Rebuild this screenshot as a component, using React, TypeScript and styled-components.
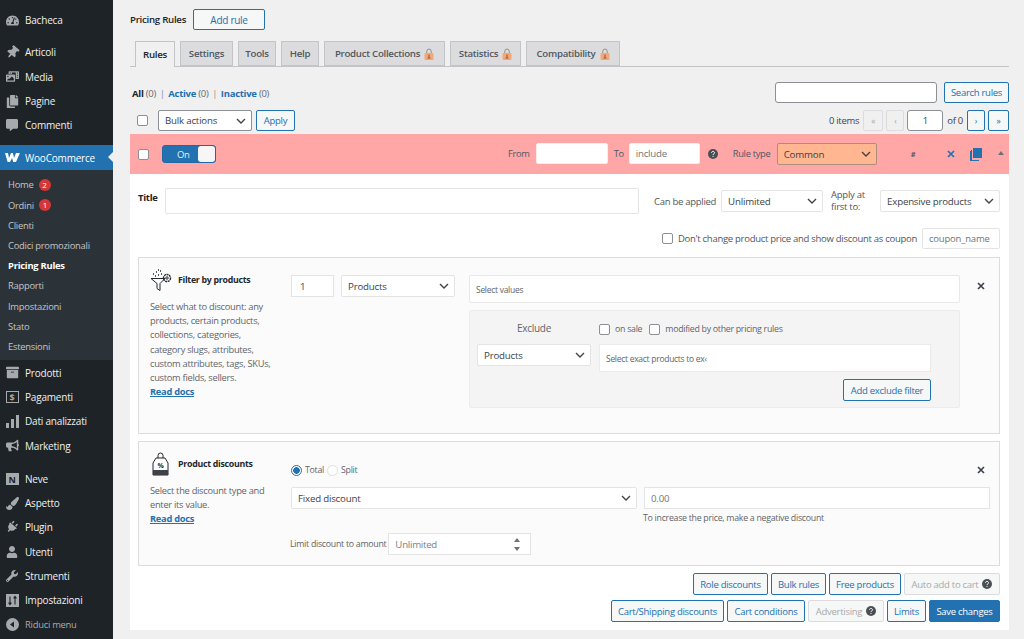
import { ReactNode } from 'react'
import styled, { createGlobalStyle } from 'styled-components'
import {
  FaTachometerAlt,
  FaThumbtack,
  FaPhotoVideo,
  FaCopy,
  FaCommentAlt,
  FaArchive,
  FaBullhorn,
  FaPaintBrush,
  FaPlug,
  FaUser,
  FaWrench,
} from 'react-icons/fa'

const font = `'Open Sans', 'Noto Sans', sans-serif`
const chevron = `url("data:image/svg+xml,%3Csvg xmlns='http://www.w3.org/2000/svg' width='10' height='6' viewBox='0 0 10 6'%3E%3Cpath d='M1 1l4 4 4-4' fill='none' stroke='%23444' stroke-width='1.4'/%3E%3C/svg%3E")`

const GlobalStyle = createGlobalStyle`
  html, body {
    margin: 0;
    padding: 0;
    background: #f0f0f1;
    font-family: ${font};
    overflow: hidden;
  }
  * { box-sizing: border-box; }
  input, select, button { letter-spacing: -0.2px; }
`

type TopItem = { label: string; icon: ReactNode; gap?: number }

const PayIcon = () => <BoxGlyph $outline>$</BoxGlyph>
const NeveIcon = () => <BoxGlyph>N</BoxGlyph>

const PinIcon = () => (
  <Tilted>
    <FaThumbtack size={13} />
  </Tilted>
)

const PlugIcon = () => (
  <Tilted>
    <FaPlug size={12} />
  </Tilted>
)

const BarsIcon = () => (
  <svg width="13" height="13" viewBox="0 0 13 13" fill="currentColor">
    <rect x="0" y="8" width="3" height="5" />
    <rect x="5" y="4" width="3" height="9" />
    <rect x="10" y="0" width="3" height="13" />
  </svg>
)

const SlidersIcon = () => (
  <svg width="13" height="13" viewBox="0 0 13 13">
    <rect width="13" height="13" fill="currentColor" />
    <path d="M4 2.5v8M2.6 8.6L4 10.5l1.4-1.9M9 10.5v-8M7.6 4.4L9 2.5l1.4 1.9" stroke="#1d2327" strokeWidth="1.1" fill="none" />
  </svg>
)

const CollapseIcon = () => (
  <svg width="13" height="13" viewBox="0 0 13 13">
    <circle cx="6.5" cy="6.5" r="6.5" fill="currentColor" />
    <path d="M8 3.4v6.2L4 6.5z" fill="#1d2327" />
  </svg>
)

const WooIcon = () => (
  <svg width="15" height="9" viewBox="0 0 15 9" fill="#fff">
    <path d="M0 0h3l1 5 2-5h2l1 5 2-5h3.500q.5 0 .2.600L11 9H8.300L7 5 5 9H2.600z" />
  </svg>
)

const FunnelIcon = () => (
  <svg width="23" height="23" viewBox="0 0 23 23" fill="none" stroke="#23282d" strokeWidth="1">
    <path d="M1 9.500h14l-5 5v7l-3-2v-5z" />
    <circle cx="17" cy="9" r="3.500" strokeDasharray="2 0.6" strokeWidth="1.400" />
    <circle cx="17" cy="9" r="1.200" />
    <path d="M3 5h1M6 3h1M8 6h1M5 7h1M10 2h1M11 5h1M8 1h1" strokeWidth="1.300" />
  </svg>
)

const TagIcon = () => (
  <svg width="17" height="24" viewBox="0 0 17 24">
    <path d="M8.500 1a2.500 2.500 0 0 1 2.500 2.500V7H6V3.500A2.500 2.500 0 0 1 8.500 1z" fill="none" stroke="#23282d" />
    <path d="M4 6h9l3 5v12H1V11z" fill="#fff" stroke="#23282d" />
    <rect x="1" y="18" width="15" height="5" fill="#3c4248" />
    <text x="8.500" y="16" fontSize="7" fontWeight="700" textAnchor="middle" fill="#23282d" fontFamily="Open Sans">%</text>
  </svg>
)

const LockIcon = () => (
  <svg width="10" height="12" viewBox="0 0 10 12">
    <path d="M2.800 5.500V3.200a2.200 2.200 0 0 1 4.400 0v2.300" fill="none" stroke="#9a8f7c" strokeWidth="1" />
    <rect x="0.500" y="5" width="9" height="7" rx="1" fill="#f2a878" />
    <path d="M5 6.500v3M3.500 10h3" stroke="#a34a2a" strokeWidth="1" />
  </svg>
)

const HelpIcon = () => (
  <svg width="10" height="10" viewBox="0 0 10 10">
    <circle cx="5" cy="5" r="5" fill="#4a4f54" />
    <path d="M3.500 3.900c0-2 3-2 3 0 0 1-1.500 1-1.500 2.100" fill="none" stroke="#fff" strokeWidth="1" />
    <rect x="4.500" y="6.900" width="1" height="1" fill="#fff" />
  </svg>
)

const CopyIcon = () => (
  <svg width="12" height="13" viewBox="0 0 12 13" fill="#2271b1">
    <path d="M3 0h9v10H3z" />
    <path d="M1 2v11h8v-1H2V2z" />
    <path d="M0 3h1v10H0z" />
  </svg>
)

const CloseGlyph = () => (
  <svg width="8" height="8" viewBox="0 0 8 8" stroke="currentColor" strokeWidth="1.7">
    <path d="M1 1l6 6M7 1L1 7" />
  </svg>
)

const topItems: TopItem[] = [
  { label: 'Bacheca', icon: <FaTachometerAlt size={13} /> },
  { label: 'Articoli', icon: <PinIcon />, gap: 8 },
  { label: 'Media', icon: <FaPhotoVideo size={13} /> },
  { label: 'Pagine', icon: <FaCopy size={13} /> },
  { label: 'Commenti', icon: <FaCommentAlt size={12} /> },
]

const subItems = [
  { label: 'Home', badge: 2 },
  { label: 'Ordini', badge: 1 },
  { label: 'Clienti' },
  { label: 'Codici promozionali' },
  { label: 'Pricing Rules', current: true },
  { label: 'Rapporti' },
  { label: 'Impostazioni' },
  { label: 'Stato' },
  { label: 'Estensioni' },
]

const lowerItems: TopItem[] = [
  { label: 'Prodotti', icon: <FaArchive size={13} /> },
  { label: 'Pagamenti', icon: <PayIcon /> },
  { label: 'Dati analizzati', icon: <BarsIcon /> },
  { label: 'Marketing', icon: <FaBullhorn size={13} /> },
  { label: 'Neve', icon: <NeveIcon />, gap: 9 },
  { label: 'Aspetto', icon: <FaPaintBrush size={13} /> },
  { label: 'Plugin', icon: <PlugIcon /> },
  { label: 'Utenti', icon: <FaUser size={12} /> },
  { label: 'Strumenti', icon: <FaWrench size={12} /> },
  { label: 'Impostazioni', icon: <SlidersIcon /> },
]

const tabs = [
  { label: 'Rules', active: true, width: 40 },
  { label: 'Settings', width: 53 },
  { label: 'Tools', width: 38 },
  { label: 'Help', width: 38 },
  { label: 'Product Collections', locked: true, width: 121 },
  { label: 'Statistics', locked: true, width: 71 },
  { label: 'Compatibility', locked: true, width: 94 },
]

const App = () => {
  return (
    <Page>
      <GlobalStyle />
      <Sidebar>
        {topItems.map((item) => (
          <MenuItem key={item.label} $gap={item.gap}>
            <MenuIcon>{item.icon}</MenuIcon>
            {item.label}
          </MenuItem>
        ))}
        <WooItem>
          <MenuIcon>
            <WooIcon />
          </MenuIcon>
          WooCommerce
        </WooItem>
        <SubMenu>
          {subItems.map((item) => (
            <SubItem key={item.label} $current={item.current}>
              {item.label}
              {item.badge && <Badge>{item.badge}</Badge>}
            </SubItem>
          ))}
        </SubMenu>
        {lowerItems.map((item) => (
          <MenuItem key={item.label} $gap={item.gap}>
            <MenuIcon>{item.icon}</MenuIcon>
            {item.label}
          </MenuItem>
        ))}
        <CollapseItem>
          <MenuIcon>
            <CollapseIcon />
          </MenuIcon>
          Riduci menu
        </CollapseItem>
      </Sidebar>

      <Main>
        <Header>
          <PageTitle>Pricing Rules</PageTitle>
          <AddRule $width={72}>Add rule</AddRule>
        </Header>

        <Tabs>
          {tabs.map((tab) => (
            <Tab key={tab.label} $active={tab.active} $width={tab.width}>
              {tab.label}
              {tab.locked && <LockIcon />}
            </Tab>
          ))}
        </Tabs>

        <FilterRow>
          <Views>
            <strong>All</strong> <Count>(0)</Count> <Sep>|</Sep> <ViewLink>Active</ViewLink> <Count>(0)</Count> <Sep>|</Sep>{' '}
            <ViewLink>Inactive</ViewLink> <Count>(0)</Count>
          </Views>
          <SearchBox>
            <SearchInput />
            <ToolButton $width={65}>Search rules</ToolButton>
          </SearchBox>
        </FilterRow>

        <BulkRow>
          <BulkCheck>
            <Check />
          </BulkCheck>
          <Select $width={94} $strong defaultValue="Bulk actions">
            <option>Bulk actions</option>
          </Select>
          <ToolButton $width={39}>Apply</ToolButton>
          <Pagination>
            <ItemsText>0 items</ItemsText>
            <PageButton $disabled $width={20}>«</PageButton>
            <PageButton $disabled $width={18}>‹</PageButton>
            <PageInput defaultValue="1" />
            <ItemsText>of 0</ItemsText>
            <PageButton $width={18}>›</PageButton>
            <PageButton $width={21}>»</PageButton>
          </Pagination>
        </BulkRow>

        <RuleBar>
          <Check />
          <Toggle>
            <span>On</span>
            <Knob />
          </Toggle>
          <BarLabel $left={292} $width={21}>From</BarLabel>
          <BarInput $width={72} $left={6} />
          <BarLabel $left={6} $width={11}>To</BarLabel>
          <BarInput $width={71} $left={4} placeholder="include" />
          <BarHelp>
            <HelpIcon />
          </BarHelp>
          <BarLabel $left={15} $width={38}>Rule type</BarLabel>
          <RuleType defaultValue="Common">
            <option>Common</option>
          </RuleType>
          <Hash>#</Hash>
          <BarClose>
            <CloseGlyph />
          </BarClose>
          <BarCopy>
            <CopyIcon />
          </BarCopy>
          <UpArrow />
        </RuleBar>

        <RuleBody>
          <TitleRow>
            <TitleLabel>Title</TitleLabel>
            <TitleInput />
            <FieldLabel $left={15} $width={61}>Can be applied</FieldLabel>
            <Select $width={102} $left={5} defaultValue="Unlimited">
              <option>Unlimited</option>
            </Select>
            <FirstLabel>Apply at first to:</FirstLabel>
            <Select $width={120} defaultValue="Expensive products">
              <option>Expensive products</option>
            </Select>
          </TitleRow>

          <CouponRow>
            <Check />
            <FieldLabel $left={5}>Don't change product price and show discount as coupon</FieldLabel>
            <CouponInput placeholder="coupon_name" />
          </CouponRow>

          <FilterPanel>
            <PanelInfo>
              <PanelHead>
                <FunnelIcon />
                <PanelTitle>Filter by products</PanelTitle>
              </PanelHead>
              <PanelText>
                Select what to discount: any
                <br />
                products, certain products,
                <br />
                collections, categories,
                <br />
                category slugs, attributes,
                <br />
                custom attributes, tags, SKUs,
                <br />
                custom fields, sellers.
              </PanelText>
              <DocsLink>Read docs</DocsLink>
            </PanelInfo>
            <QtyInput defaultValue="1" />
            <Select $width={114} $left={7} defaultValue="Products">
              <option>Products</option>
            </Select>
            <Values>
              <ValueBox>Select values</ValueBox>
              <Exclude>
                <ExcludeTitle>Exclude</ExcludeTitle>
                <ExcludeChecks>
                  <Check />
                  <SmallLabel>on sale</SmallLabel>
                  <Check />
                  <SmallLabel>modified by other pricing rules</SmallLabel>
                </ExcludeChecks>
                <Select $width={114} defaultValue="Products">
                  <option>Products</option>
                </Select>
                <ExcludeValue>Select exact products to ex‹</ExcludeValue>
                <ExcludeAction>
                  <OutlineButton $width={88}>Add exclude filter</OutlineButton>
                </ExcludeAction>
              </Exclude>
            </Values>
            <PanelClose>
              <CloseGlyph />
            </PanelClose>
          </FilterPanel>

          <DiscountPanel>
            <PanelInfo>
              <PanelHead>
                <TagSlot>
                  <TagIcon />
                </TagSlot>
                <PanelTitle>Product discounts</PanelTitle>
              </PanelHead>
              <PanelText>
                Select the discount type and
                <br />
                enter its value.
              </PanelText>
              <DocsLink>Read docs</DocsLink>
            </PanelInfo>
            <DiscountFields>
              <RadioRow>
                <Radio $checked />
                <SmallLabel>Total</SmallLabel>
                <Radio />
                <SmallLabel>Split</SmallLabel>
                <DiscountClose>
                  <CloseGlyph />
                </DiscountClose>
              </RadioRow>
              <AmountGrid>
                <Select $width={346} defaultValue="Fixed discount">
                  <option>Fixed discount</option>
                </Select>
                <AmountInput placeholder="0.00" />
              </AmountGrid>
              <Hint>To increase the price, make a negative discount</Hint>
              <LimitRow>
                <LimitLabel>Limit discount to amount</LimitLabel>
                <Spinner>
                  Unlimited
                  <SpinArrows>
                    <SpinUp />
                    <SpinDown />
                  </SpinArrows>
                </Spinner>
              </LimitRow>
            </DiscountFields>
          </DiscountPanel>

          <ActionRow>
            <OutlineButton $width={75}>Role discounts</OutlineButton>
            <OutlineButton $width={55}>Bulk rules</OutlineButton>
            <OutlineButton $width={72}>Free products</OutlineButton>
            <DisabledButton $width={96}>
              Auto add to cart <HelpIcon />
            </DisabledButton>
          </ActionRow>
          <ActionRow>
            <OutlineButton $width={113}>Cart/Shipping discounts</OutlineButton>
            <OutlineButton $width={78}>Cart conditions</OutlineButton>
            <DisabledButton $width={76}>
              Advertising <HelpIcon />
            </DisabledButton>
            <OutlineButton $width={39}>Limits</OutlineButton>
            <SaveButton $width={71}>Save changes</SaveButton>
          </ActionRow>
        </RuleBody>
      </Main>
    </Page>
  )
}

export default App

const Page = styled.div`
  display: flex;
  width: 1024px;
  height: 639px;
  overflow: hidden;
  background: #f0f0f1;
`

const Sidebar = styled.nav`
  flex: 0 0 113px;
  background: #1d2327;
  padding-top: 8px;
  color: #f0f0f1;
  font-size: 10px;
  letter-spacing: -0.2px;
`

const MenuItem = styled.div<{ $gap?: number }>`
  display: flex;
  align-items: center;
  height: 24.300px;
  margin-top: ${(props) => props.$gap ?? 0}px;
`

const MenuIcon = styled.span`
  flex: 0 0 25px;
  display: flex;
  justify-content: center;
  padding-right: 1px;
  color: #a7aaad;
`

const Tilted = styled.span`
  display: flex;
  transform: rotate(40deg);
`

const BoxGlyph = styled.span<{ $outline?: boolean }>`
  display: block;
  width: 13px;
  height: 12px;
  font-size: 9px;
  font-weight: 700;
  line-height: 11px;
  text-align: center;
  border: 1px solid #a7aaad;
  background: ${(props) => (props.$outline ? 'transparent' : '#a7aaad')};
  color: ${(props) => (props.$outline ? '#a7aaad' : '#1d2327')};
`

const WooItem = styled(MenuItem)`
  position: relative;
  margin-top: 8px;
  background: #2271b1;
  color: #fff;
  ${MenuIcon} {
    color: #fff;
  }
  &::after {
    content: '';
    position: absolute;
    right: 0;
    top: 7px;
    border: 5px solid transparent;
    border-right-color: #f0f0f1;
  }
`

const SubMenu = styled.div`
  background: #2c3338;
  padding: 5px 0 4px;
`

const SubItem = styled.div<{ $current?: boolean }>`
  display: flex;
  align-items: center;
  height: 20.200px;
  padding-left: 8px;
  font-size: 9.400px;
  letter-spacing: -0.25px;
  font-weight: ${(props) => (props.$current ? 700 : 400)};
  color: ${(props) => (props.$current ? '#fff' : '#c3c4c7')};
`

const Badge = styled.span`
  width: 12px;
  height: 12px;
  margin-left: 5px;
  border-radius: 50%;
  background: #d63638;
  color: #fff;
  font-size: 8px;
  line-height: 12px;
  text-align: center;
`

const CollapseItem = styled(MenuItem)`
  color: #a7aaad;
  font-size: 9.400px;
  letter-spacing: -0.25px;
`

const Main = styled.main`
  flex: 1;
  min-width: 0;
  padding: 9px 15px 0 17px;
  font-size: 9.500px;
  letter-spacing: -0.28px;
  color: #3c434a;
`

const Header = styled.div`
  display: flex;
  align-items: center;
  height: 21px;
`

const PageTitle = styled.h1`
  flex: 0 0 63px;
  margin: 0;
  font-size: 9.700px;
  font-weight: 600;
  color: #1d2327;
  white-space: nowrap;
`

const OutlineButton = styled.button<{ $width: number }>`
  flex: none;
  width: ${(props) => props.$width}px;
  height: 22px;
  padding: 0;
  border: 1px solid #2271b1;
  border-radius: 2px;
  background: #f6f7f7;
  color: #2271b1;
  font-family: ${font};
  font-size: 9.500px;
  letter-spacing: -0.28px;
  white-space: nowrap;
`

const AddRule = styled(OutlineButton)`
  height: 21px;
  font-size: 10px;
`

const ToolButton = styled(OutlineButton)`
  height: 21px;
`

const Tabs = styled.div`
  display: flex;
  gap: 5px;
  height: 26px;
  margin-top: 11px;
  padding-left: 5px;
  border-bottom: 1px solid #c3c4c7;
`

const Tab = styled.div<{ $active?: boolean; $width: number }>`
  display: flex;
  align-items: center;
  justify-content: center;
  gap: 4px;
  width: ${(props) => props.$width}px;
  height: ${(props) => (props.$active ? 26 : 25)}px;
  border: 1px solid #c3c4c7;
  border-bottom: ${(props) => (props.$active ? 'none' : '1px solid #c3c4c7')};
  background: ${(props) => (props.$active ? '#f0f0f1' : '#dcdcde')};
  color: ${(props) => (props.$active ? '#1d2327' : '#50575e')};
  font-size: 9.700px;
  font-weight: 600;
  white-space: nowrap;
`

const FilterRow = styled.div`
  display: flex;
  align-items: center;
  justify-content: space-between;
  margin-top: 14px;
  height: 22px;
`

const Views = styled.div`
  padding: 2px 0 0 2px;
  font-size: 9.500px;
  color: #1d2327;
`

const Count = styled.span`
  color: #646970;
`

const Sep = styled.span`
  color: #8c8f94;
  padding: 0 1.500px;
`

const ViewLink = styled.strong`
  color: #2271b1;
`

const SearchBox = styled.div`
  display: flex;
  gap: 7px;
`

const SearchInput = styled.input`
  width: 162px;
  height: 21px;
  border: 1px solid #8c8f94;
  border-radius: 3px;
  background: #fff;
`

const BulkRow = styled.div`
  display: flex;
  align-items: center;
  gap: 4px;
  height: 21px;
  margin-top: 7px;
`

const BulkCheck = styled.span`
  display: flex;
  width: 24px;
  padding-left: 7px;
`

const Check = styled.input.attrs({ type: 'checkbox' })`
  appearance: none;
  flex: none;
  width: 11px;
  height: 11px;
  margin: 0;
  border: 1px solid #8c8f94;
  border-radius: 2px;
  background: #fff;
`

const Select = styled.select<{ $width: number; $left?: number; $strong?: boolean }>`
  appearance: none;
  flex: none;
  width: ${(props) => props.$width}px;
  height: ${(props) => (props.$strong ? 21 : 22)}px;
  margin-left: ${(props) => props.$left ?? 0}px;
  padding: 0 16px 0 6px;
  border: 1px solid ${(props) => (props.$strong ? '#8c8f94' : '#e4e4e4')};
  border-radius: 2px;
  background: #fff ${chevron} no-repeat right 5px center;
  color: #3c434a;
  font-family: ${font};
  font-size: 9.700px;
`

const Pagination = styled.div`
  display: flex;
  align-items: center;
  gap: 3px;
  margin-left: auto;
`

const ItemsText = styled.span`
  padding: 0 1px;
  color: #3c434a;
`

const PageButton = styled.span<{ $disabled?: boolean; $width: number }>`
  display: flex;
  align-items: center;
  justify-content: center;
  width: ${(props) => props.$width}px;
  height: 21px;
  border: 1px solid ${(props) => (props.$disabled ? '#dcdcde' : '#2271b1')};
  border-radius: 2px;
  background: ${(props) => (props.$disabled ? '#f0f0f1' : '#f6f7f7')};
  color: ${(props) => (props.$disabled ? '#a7aaad' : '#2271b1')};
  font-size: 8.500px;
`

const PageInput = styled.input`
  width: 36px;
  height: 21px;
  border: 1px solid #8c8f94;
  border-radius: 3px;
  background: #fff;
  color: #3c434a;
  font-family: ${font};
  font-size: 9.500px;
  text-align: center;
`

const RuleBar = styled.div`
  display: flex;
  align-items: center;
  height: 40px;
  margin-top: 3px;
  padding-left: 8px;
  background: #ffa6a6;
`

const Toggle = styled.div`
  display: flex;
  align-items: center;
  justify-content: space-between;
  flex: none;
  width: 54px;
  height: 18px;
  margin-left: 13px;
  padding: 0 0 0 14px;
  border: 1px solid #1f6aa5;
  border-radius: 3px;
  background: #2271b1;
  color: #e6eef5;
  font-size: 9.500px;
`

const Knob = styled.span`
  width: 17px;
  height: 16px;
  border-radius: 3px;
  background: #f6f6f6;
`

const BarLabel = styled.span<{ $left: number; $width: number }>`
  flex: 0 0 ${(props) => props.$width}px;
  margin: 0 0 2px ${(props) => props.$left}px;
  color: #50575e;
  font-size: 9.300px;
  white-space: nowrap;
`

const BarInput = styled.input<{ $width: number; $left: number }>`
  flex: none;
  width: ${(props) => props.$width}px;
  height: 21px;
  margin: 0 0 1px ${(props) => props.$left}px;
  padding: 0 6px;
  border: 1px solid #fbeaea;
  border-radius: 2px;
  background: #fff;
  font-family: ${font};
  font-size: 9.700px;
  &::placeholder {
    color: #6f767c;
  }
`

const BarHelp = styled.span`
  display: flex;
  margin-left: 8px;
`

const RuleType = styled.select`
  appearance: none;
  flex: none;
  width: 100px;
  height: 22px;
  margin-left: 6px;
  padding: 0 16px 0 6px;
  border: 1px solid #a98f7c;
  border-radius: 2px;
  background: #ffb691 ${chevron} no-repeat right 5px center;
  color: #3c434a;
  font-family: ${font};
  font-size: 9.700px;
`

const Hash = styled.span`
  flex: 0 0 6px;
  margin-left: 34px;
  color: #50575e;
  font-size: 7.500px;
  font-weight: 700;
`

const BarClose = styled.span`
  display: flex;
  margin-left: 30px;
  color: #2271b1;
`

const BarCopy = styled.span`
  display: flex;
  margin-left: 15px;
`

const UpArrow = styled.span`
  margin-left: 16px;
  margin-bottom: 2px;
  border: 3px solid transparent;
  border-top: 0;
  border-bottom: 4px solid #6a7278;
`

const RuleBody = styled.div`
  padding: 14px 9px 8px 8px;
  background: #fff;
`

const TitleRow = styled.div`
  display: flex;
  align-items: center;
  height: 26px;
`

const TitleLabel = styled.label`
  flex: 0 0 27px;
  color: #1d2327;
  font-size: 9.500px;
  font-weight: 700;
  margin-top: -8px;
`

const TitleInput = styled.input`
  flex: none;
  width: 474px;
  height: 26px;
  border: 1px solid #e4e4e4;
  border-radius: 2px;
  background: #fff;
`

const FieldLabel = styled.label<{ $left: number; $width?: number }>`
  flex: ${(props) => (props.$width ? `0 0 ${props.$width}px` : 'none')};
  margin-left: ${(props) => props.$left}px;
  color: #50575e;
  font-size: 9.500px;
  white-space: nowrap;
`

const FirstLabel = styled.label`
  flex: 0 0 49px;
  margin-left: 8px;
  color: #50575e;
  font-size: 9.500px;
  line-height: 12px;
`

const CouponRow = styled.div`
  display: flex;
  align-items: center;
  justify-content: flex-end;
  height: 21px;
  margin-top: 14px;
`

const CouponInput = styled.input`
  width: 78px;
  height: 21px;
  margin-left: 5px;
  padding: 0 6px;
  border: 1px solid #e4e4e4;
  border-radius: 2px;
  font-family: ${font};
  font-size: 9.500px;
  &::placeholder {
    color: #6f767c;
  }
`

const FilterPanel = styled.section`
  display: flex;
  align-items: flex-start;
  height: 177px;
  margin-top: 8px;
  padding-top: 17px;
  border: 1px solid #dcdcde;
  background: #fbfbfb;
`

const DiscountPanel = styled.section`
  display: flex;
  align-items: flex-start;
  height: 125px;
  margin-top: 7px;
  border: 1px solid #dcdcde;
  background: #fbfbfb;
`

const PanelInfo = styled.div`
  flex: 0 0 152px;
  padding: 0 0 0 11px;
  margin-top: -7px;
  ${DiscountPanel} & {
    margin-top: 10px;
  }
`

const PanelHead = styled.div`
  display: flex;
  align-items: center;
  gap: 5px;
  height: 24px;
  margin-bottom: 8px;
`

const TagSlot = styled.span`
  display: flex;
  width: 23px;
  padding-left: 2px;
`

const PanelTitle = styled.h3`
  margin: 0;
  color: #23282d;
  font-size: 8.800px;
  font-weight: 700;
  white-space: nowrap;
`

const PanelText = styled.p`
  margin: 0;
  color: #5f656b;
  font-size: 9.300px;
  line-height: 14.200px;
  white-space: nowrap;
`

const DocsLink = styled.a`
  display: block;
  color: #2271b1;
  font-size: 9.300px;
  font-weight: 700;
  line-height: 13.500px;
  text-decoration: underline;
`

const QtyInput = styled.input`
  flex: none;
  width: 43px;
  height: 22px;
  padding: 0 8px;
  border: 1px solid #e4e4e4;
  background: #fff;
  color: #3c434a;
  font-family: ${font};
  font-size: 9.700px;
`

const Values = styled.div`
  flex: 0 0 491px;
  margin-left: 14px;
`

const ValueBox = styled.div`
  display: flex;
  align-items: center;
  height: 28px;
  padding: 1px 0 0 6px;
  border: 1px solid #e8e8e8;
  border-radius: 2px;
  background: #fff;
  color: #5f656b;
  font-size: 8.500px;
`

const Exclude = styled.div`
  display: grid;
  grid-template-columns: 114px 332px;
  grid-template-rows: 33px 28px auto;
  column-gap: 8px;
  align-items: start;
  height: 98px;
  margin-top: 7px;
  padding-left: 7px;
  border: 1px solid #ececec;
  border-radius: 2px;
  background: #f4f4f4;
`

const ExcludeTitle = styled.div`
  align-self: center;
  text-align: center;
  color: #5f656b;
  font-size: 10px;
`

const ExcludeChecks = styled.div`
  display: flex;
  align-items: center;
  align-self: center;
  gap: 5px;
  padding-top: 3px;
  ${Check}:nth-of-type(2) {
    margin-left: 2px;
  }
`

const SmallLabel = styled.span`
  flex: none;
  color: #5f656b;
  font-size: 8.800px;
`

const LimitLabel = styled(SmallLabel)`
  flex: 0 0 95px;
  white-space: nowrap;
`

const ExcludeValue = styled.div`
  display: flex;
  align-items: center;
  height: 28px;
  padding: 1px 0 0 6px;
  border: 1px solid #eaeaea;
  background: #fff;
  color: #5f656b;
  font-size: 8.500px;
`

const ExcludeAction = styled.div`
  grid-column: 1 / 3;
  display: flex;
  justify-content: flex-end;
  padding-top: 7px;
`

const PanelClose = styled.span`
  display: flex;
  margin: 7px 0 0 17px;
  color: #3c434a;
`

const DiscountFields = styled.div`
  flex: 0 0 699px;
  padding-top: 22px;
`

const RadioRow = styled.div`
  display: flex;
  align-items: center;
  gap: 3px;
  height: 12px;
`

const Radio = styled.span<{ $checked?: boolean }>`
  flex: none;
  width: 11px;
  height: 11px;
  border-radius: 50%;
  border: 1px solid ${(props) => (props.$checked ? '#2271b1' : '#e0e0e0')};
  background: ${(props) =>
    props.$checked ? 'radial-gradient(circle, #2271b1 0 3px, #fff 3.600px)' : '#fff'};
`

const DiscountClose = styled.span`
  display: flex;
  margin-left: auto;
  margin-right: 5px;
  color: #3c434a;
`

const AmountGrid = styled.div`
  display: flex;
  gap: 7px;
  margin-top: 11px;
`

const AmountInput = styled.input`
  width: 346px;
  height: 22px;
  padding: 0 6px;
  border: 1px solid #e4e4e4;
  background: #fff;
  font-family: ${font};
  font-size: 9.700px;
  &::placeholder {
    color: #6f767c;
  }
`

const Hint = styled.div`
  margin: 3px 0 0 352px;
  height: 12px;
  color: #5f656b;
  font-size: 8.800px;
  line-height: 12px;
`

const LimitRow = styled.div`
  display: flex;
  align-items: center;
  gap: 2px;
  margin: 9px 0 0 -1px;
`

const Spinner = styled.div`
  display: flex;
  align-items: center;
  justify-content: space-between;
  width: 143px;
  height: 22px;
  padding: 0 10px 0 6px;
  border: 1px solid #e4e4e4;
  background: #fff;
  color: #7a8087;
  font-size: 9.700px;
`

const SpinArrows = styled.span`
  display: flex;
  flex-direction: column;
  gap: 5px;
`

const SpinUp = styled.span`
  border: 3px solid transparent;
  border-top: 0;
  border-bottom: 4px solid #6a7278;
`

const SpinDown = styled.span`
  border: 3px solid transparent;
  border-bottom: 0;
  border-top: 4px solid #6a7278;
`

const ActionRow = styled.div`
  display: flex;
  justify-content: flex-end;
  gap: 3px;
  margin-top: 7px;
  & + & {
    margin-top: 5px;
  }
`

const DisabledButton = styled.button<{ $width: number }>`
  display: flex;
  align-items: center;
  justify-content: center;
  gap: 4px;
  flex: none;
  width: ${(props) => props.$width}px;
  height: 22px;
  padding: 0;
  border: 1px solid #dcdcde;
  border-radius: 2px;
  background: #f6f7f7;
  color: #a7aaad;
  font-family: ${font};
  font-size: 9.500px;
  letter-spacing: -0.28px;
`

const SaveButton = styled(OutlineButton)`
  background: #2271b1;
  color: #fff;
`
